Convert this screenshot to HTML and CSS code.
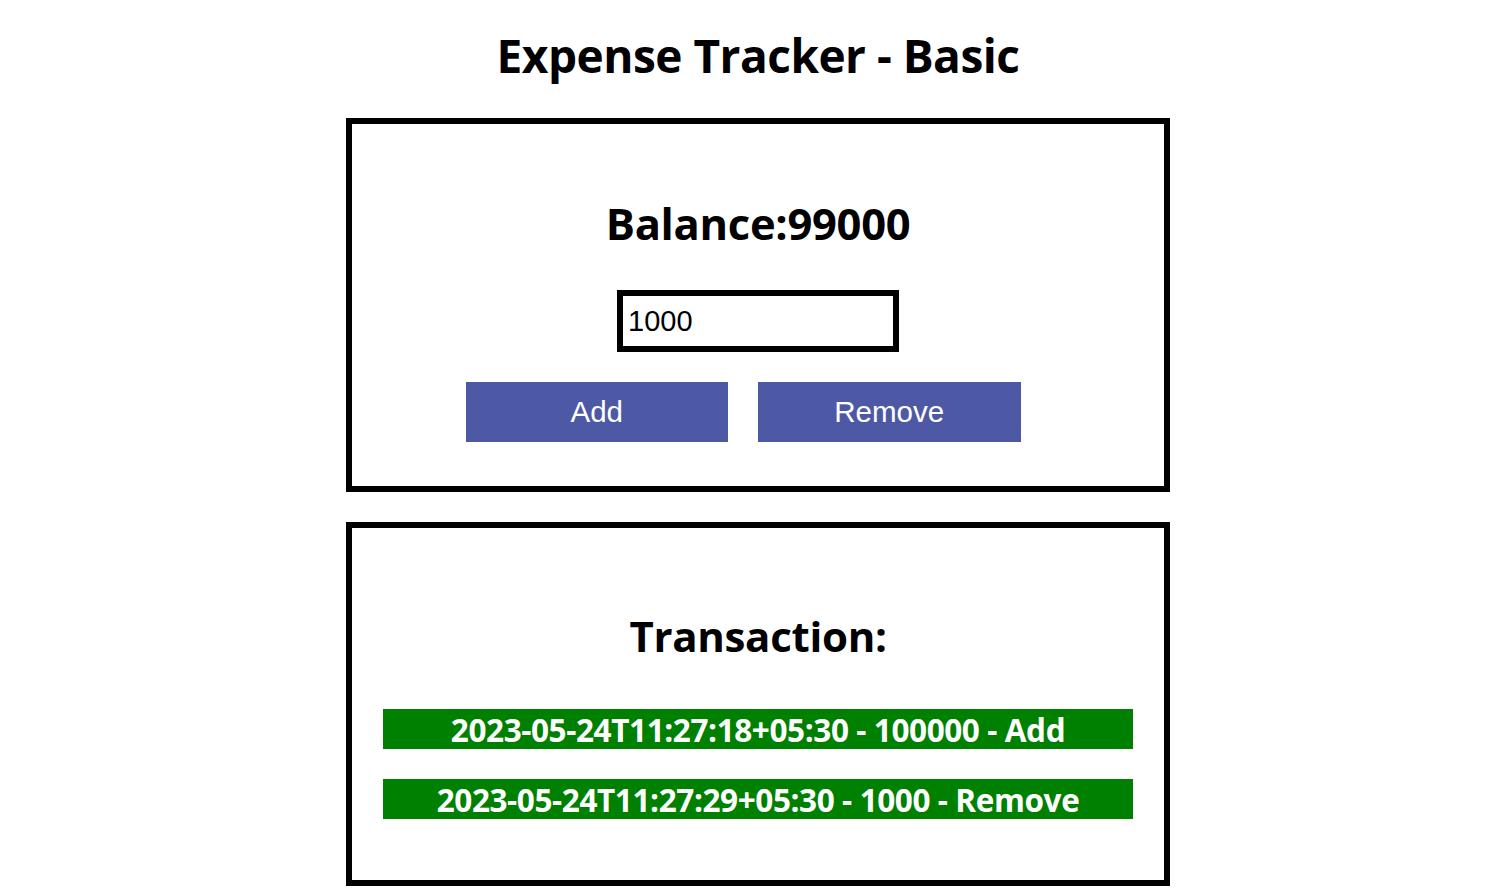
FILE: index.html
```html
<!DOCTYPE html>
<html lang="en">
<head>
<meta charset="utf-8">
<title>Expense Tracker - Basic</title>
<link rel="stylesheet" href="styles.css">
</head>
<body>
<div class="page">
  <h1 class="title">Expense Tracker - Basic</h1>
  <section class="card balance-card">
    <h2 class="heading balance">Balance:99000</h2>
    <input class="amount" type="text" value="1000">
    <div class="actions">
      <button class="btn">Add</button>
      <button class="btn">Remove</button>
    </div>
  </section>
  <section class="card tx-card">
    <h2 class="heading tx-heading">Transaction:</h2>
    <ul class="tx-list">
      <li class="tx">2023-05-24T11:27:18+05:30 - 100000 - Add</li>
      <li class="tx">2023-05-24T11:27:29+05:30 - 1000 - Remove</li>
    </ul>
  </section>
</div>
</body>
</html>
```
FILE: styles.css
```css
html, body {
  margin: 0;
  padding: 0;
  background: #fff;
}
body {
  font-family: "Open Sans", "Noto Sans", "DejaVu Sans", sans-serif;
  color: #000;
}
.page {
  padding-left: 19px;
  display: flex;
  flex-direction: column;
  align-items: center;
}
.title {
  margin: 0;
  padding-top: 23px;
  height: 118px;
  box-sizing: border-box;
  font-size: 46px;
  line-height: 64px;
  font-weight: 700;
  text-align: center;
  letter-spacing: -0.5px;
}
.card {
  width: 824px;
  box-sizing: border-box;
  border: 6px solid #000;
  display: flex;
  flex-direction: column;
  align-items: center;
}
.balance-card {
  height: 374px;
  padding-top: 70px;
}
.heading {
  margin: 0;
  font-size: 42px;
  line-height: 60px;
  font-weight: 700;
  letter-spacing: -0.3px;
}
.balance {
  font-size: 43.5px;
}
.amount {
  margin-top: 36px;
  width: 282px;
  height: 62px;
  box-sizing: border-box;
  border: 6px solid #000;
  padding: 0 5px;
  font-family: "Liberation Sans", Arial, sans-serif;
  font-size: 29px;
  color: #000;
  outline: none;
}
.actions {
  margin-top: 30px;
  padding-right: 30px;
  display: flex;
  gap: 30px;
}
.btn {
  width: 262.5px;
  height: 60px;
  border: none;
  background: #4e59a5;
  color: #fff;
  font-family: "Liberation Sans", Arial, sans-serif;
  font-size: 29.5px;
  padding: 0;
}
.tx-card {
  margin-top: 30px;
  height: 364px;
  padding-top: 78px;
}
.tx-list {
  list-style: none;
  margin: 43px 0 0;
  padding: 0;
  display: flex;
  flex-direction: column;
  gap: 30px;
}
.tx {
  width: 750px;
  height: 40px;
  background: #008000;
  color: #fff;
  font-size: 31.5px;
  line-height: 41px;
  font-weight: 700;
  text-align: center;
  letter-spacing: -0.4px;
}
```
